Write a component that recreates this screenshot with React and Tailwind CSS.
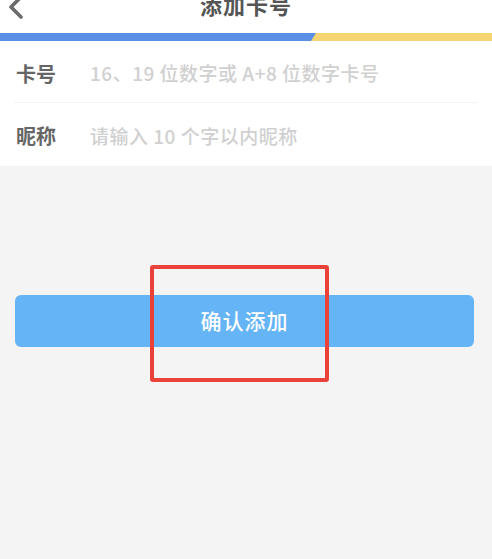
export default function App() {
  const font = { fontFamily: '"Noto Sans CJK SC", "Noto Sans", sans-serif' };
  return (
    <div className="w-[492px] h-[559px] bg-[#f4f4f4] relative overflow-hidden" style={font}>
      <div className="bg-white">
        <div className="h-[33px] relative flex items-start justify-center">
          <svg className="absolute left-[6px] top-[-6px]" width="20" height="26" viewBox="0 0 20 26">
            <path d="M15 3 L5 13 L15 23" fill="none" stroke="#6b6b6b" strokeWidth="3.6" strokeLinecap="round" strokeLinejoin="round" />
          </svg>
          <div className="text-[22px] leading-[22px] font-bold text-[#555555] mt-[-7px] tracking-[1px]">添加卡号</div>
        </div>
        <div className="h-[8px] flex">
          <svg width="492" height="8" viewBox="0 0 492 8" preserveAspectRatio="none">
            <rect x="0" y="0" width="492" height="8" fill="#f5d672" />
            <polygon points="0,0 316,0 311,8 0,8" fill="#5b8fe3" />
          </svg>
        </div>
        <div className="px-[14px]">
          <div className="h-[62px] pt-[4px] flex items-center border-b border-[#f3f3f3]">
            <div className="w-[76px] pl-[2px] text-[20px] font-bold text-[#666666]">卡号</div>
            <div className="text-[19px] font-medium text-[#d0d0d0] tracking-[0.5px]">16、19 位数字或 A+8 位数字卡号</div>
          </div>
          <div className="h-[62px] pt-[4px] flex items-center">
            <div className="w-[76px] pl-[2px] text-[20px] font-bold text-[#666666]">昵称</div>
            <div className="text-[19px] font-medium text-[#d0d0d0] tracking-[0.5px]">请输入 10 个字以内昵称</div>
          </div>
        </div>
        <div className="h-[1px]" />
      </div>
      <div className="pl-[15px] pr-[18px] pt-[129px]">
        <div className="h-[52px] rounded-[6px] bg-[#65b4f6] flex items-center justify-center">
          <span className="text-[21px] font-medium text-white tracking-[1px]">确认添加</span>
        </div>
      </div>
      <div className="absolute left-[150px] top-[265px] w-[179px] h-[117px] border-[4px] border-[#ea4238] rounded-[3px]" />
    </div>
  );
}
